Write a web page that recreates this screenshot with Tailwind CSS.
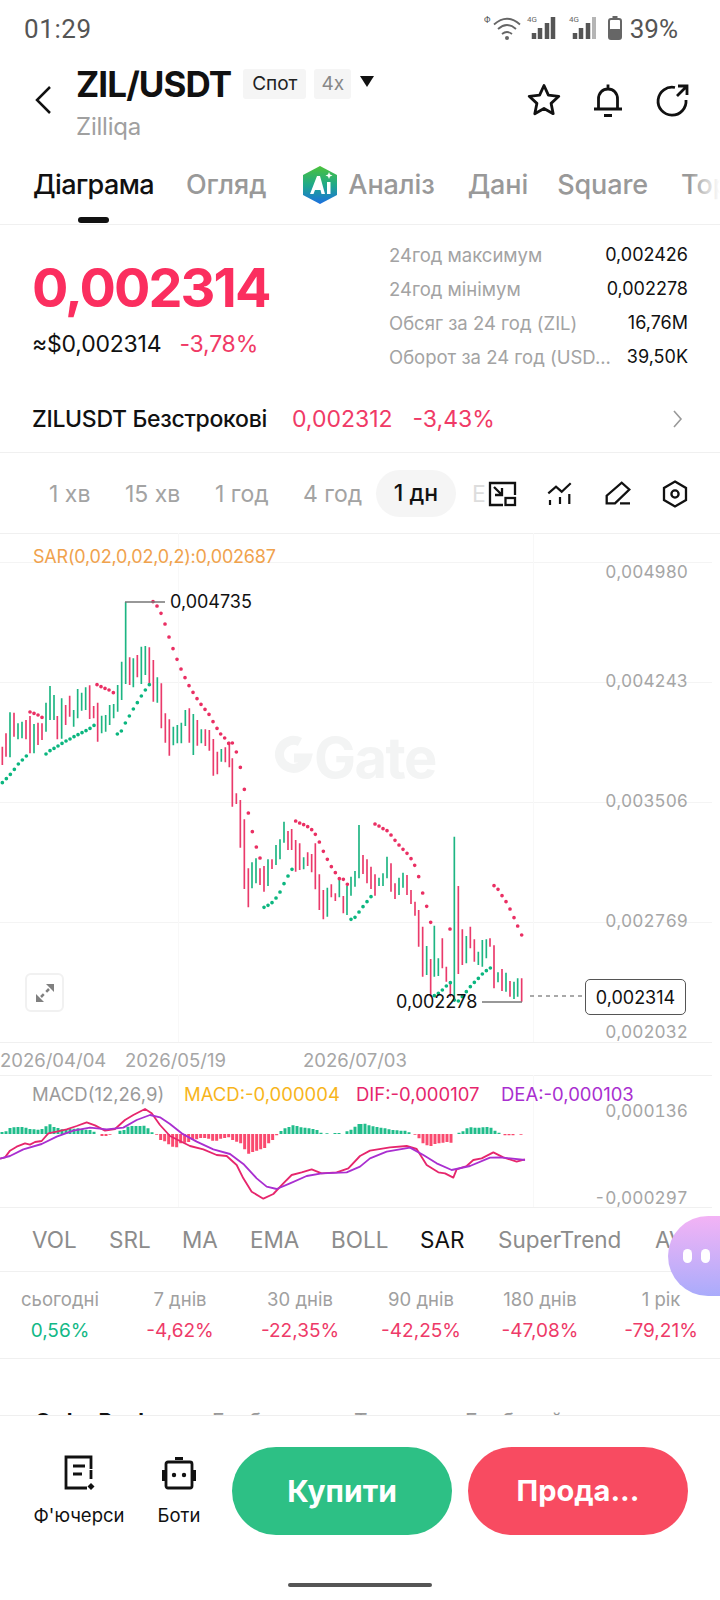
<!doctype html>
<html><head><meta charset="utf-8"><script src="https://cdn.jsdelivr.net/npm/@tailwindcss/browser@4"></script></head>
<body class="bg-white">
<div class="relative w-[720px] h-[1600px] overflow-hidden bg-white font-['Inter','Liberation_Sans',sans-serif] text-[#111]">

<div class="h-[58px] flex items-center justify-between pl-[24px] pr-[42px] font-['Roboto',sans-serif]">
  <span class="text-[26px] text-[#555] tracking-[0.6px]">01:29</span>
  <div class="flex items-center gap-[4px]">
    <svg width="142" height="32" viewBox="0 0 142 32" fill="none">
      <text x="0" y="10" font-size="9" fill="#555">Φ</text>
      <path d="M10 11.500Q23 0 36 11.500M14 16Q23 8 32 16M18 21Q23 17 28 21" stroke="#666" stroke-width="1.800"/><circle cx="23" cy="25" r="2" fill="#666"/>
      <text x="43" y="9" font-size="8" fill="#666">4G</text>
      <path d="M50 20v6M56 15v11M63 10v16M69 4v22" stroke="#555" stroke-width="4.500"/>
      <text x="85" y="9" font-size="8" fill="#666">4G</text>
      <path d="M91 20v6M97 15v11M104 10v16" stroke="#555" stroke-width="4.500"/><path d="M110 4v22" stroke="#b5b5b5" stroke-width="4"/>
      <rect x="125" y="6" width="12" height="20" rx="2" stroke="#666" stroke-width="2"/><rect x="128.500" y="3" width="5" height="3" fill="#666"/><rect x="125" y="16" width="12" height="10" rx="1.500" fill="#666"/>
    </svg>
    <span class="text-[26px] text-[#555]">39%</span>
  </div>
</div>

<div class="h-[88px] flex items-start">
  <div class="w-[76px] pl-[34px] pt-[28px]"><svg width="18" height="28" viewBox="0 0 18 28" fill="none"><path d="M16 1 3 14l13 13" stroke="#111" stroke-width="2.500"/></svg></div>
  <div class="flex-1">
    <div class="flex items-center h-[52px]">
      <span class="text-[35px] font-bold tracking-[-0.9px] leading-none">ZIL/USDT</span>
      <span class="ml-[12px] h-[30px] w-[63px] bg-[#f5f5f5] rounded-[3px] flex items-center justify-center text-[19px] text-[#222]">Спот</span>
      <span class="ml-[8px] h-[30px] w-[37px] bg-[#f5f5f5] rounded-[3px] flex items-center justify-center text-[19px] text-[#888]">4x</span>
      <svg class="ml-[9px] mb-[6px]" width="14" height="11" viewBox="0 0 14 11"><path d="M0 0h14L7 11z" fill="#111"/></svg>
    </div>
    <div class="text-[24px] text-[#a0a0a0] leading-none mt-[5px] tracking-[-0.2px]">Zilliqa</div>
  </div>
  <div class="flex items-center gap-[28px] pr-[30px] pt-[24px]">
    <svg width="36" height="36" viewBox="0 0 36 36" fill="none"><path d="M18 3.500l4.400 9.600 10.400 1.200-7.700 7.100 2.100 10.300L18 26.500l-9.200 5.200 2.100-10.300-7.700-7.100 10.400-1.200z" stroke="#111" stroke-width="2.800" stroke-linejoin="round"/></svg>
    <svg width="36" height="36" viewBox="0 0 36 36" fill="none"><path d="M4 27h28M8.500 27V17c0-6 4-10 9.500-10s9.500 4 9.500 10v10M18 2.500V7M14 33.500h8" stroke="#111" stroke-width="2.800"/></svg>
    <svg width="36" height="36" viewBox="0 0 36 36" fill="none"><path d="M21 5.500A14 14 0 1 0 32 18M23 14 32 5M24 4h9v9" stroke="#111" stroke-width="2.800"/></svg>
  </div>
</div>

<div class="relative h-[79px] border-b border-[#f0f0f0] overflow-hidden">
  <div class="flex items-center h-[78px] text-[27px] font-medium text-[#999] whitespace-nowrap tracking-[-0.1px]">
    <span class="ml-[33px] shrink-0 text-[#111] tracking-[-0.6px]">Діаграма</span>
    <span class="ml-[32px] shrink-0">Огляд</span>
    <svg class="ml-[36px] shrink-0" width="36" height="38" viewBox="0 0 36 38"><defs><linearGradient id="ai" x1="0" y1="0" x2="0" y2="1"><stop offset="0" stop-color="#4cc23a"/><stop offset="0.5" stop-color="#1fa98a"/><stop offset="1" stop-color="#1c6fe0"/></linearGradient></defs><path d="M18 0 35 9v20l-17 9L1 29V9z" fill="url(#ai)"/><path d="M8 28 15 10h3l5 18h-3.500l-1-4H13l-1.500 4zM25 16h3.500v12H25zM27 6l1 2.500 2.500 1-2.500 1-1 2.500-1-2.500-2.500-1 2.500-1z" fill="#fff"/></svg>
    <span class="ml-[10px] shrink-0">Аналіз</span>
    <span class="ml-[33px] shrink-0">Дані</span>
    <span class="ml-[29px] shrink-0">Square</span>
    <span class="ml-[33px] shrink-0">Top</span>
  </div>
  <div class="absolute left-[78px] top-[71px] w-[31px] h-[6px] rounded-full bg-[#111]"></div>
  <div class="absolute right-0 top-0 w-[30px] h-[76px] bg-gradient-to-r from-white/0 to-white"></div>
</div>

<div class="h-[177px] relative">
  <div class="pl-[32px] pt-[28px]">
    <div class="text-[54px] leading-[70px] font-bold text-[#fb2e5f] tracking-[-1.900px]">0,002314</div>
    <div class="flex items-center h-[38px] mt-[2px] text-[23px]"><span class="tracking-[-0.2px]">≈$0,002314</span><span class="ml-[18px] text-[#f03a66] tracking-[-0.2px]">-3,78%</span></div>
  </div>
  <div class="absolute left-[389px] right-[32px] top-[13px] text-[18.500px] leading-[34px]">
    <div class="flex justify-between"><span class="text-[#a3a3a3]">24год максимум</span><span class="text-[18px]">0,002426</span></div>
    <div class="flex justify-between"><span class="text-[#a3a3a3]">24год мінімум</span><span class="text-[18px]">0,002278</span></div>
    <div class="flex justify-between"><span class="text-[#a3a3a3]">Обсяг за 24 год (ZIL)</span><span class="text-[18px]">16,76M</span></div>
    <div class="flex justify-between"><span class="text-[#a3a3a3]">Оборот за 24 год (USD...</span><span class="text-[18px]">39,50K</span></div>
  </div>
</div>

<div class="h-[51px] flex items-center border-b border-[#f0f0f0] pl-[32px] pr-[36px] pb-[16px] text-[23px] relative whitespace-nowrap">
  <span class="font-medium tracking-[-0.3px]">ZILUSDT Безстрокові</span>
  <span class="ml-[25px] text-[#f03a66]">0,002312</span>
  <span class="ml-[20px] text-[#f03a66]">-3,43%</span>
  <svg class="ml-auto" width="12" height="20" viewBox="0 0 12 20" fill="none"><path d="M2 2l7 8-7 8" stroke="#999" stroke-width="1.600"/></svg>
</div>

<div class="relative h-[78px] pt-[4px] flex items-center text-[23px] text-[#a3a3a3] whitespace-nowrap">
  <span class="absolute left-[49px]">1 хв</span>
  <span class="absolute left-[125px]">15 хв</span>
  <span class="absolute left-[215px]">1 год</span>
  <span class="absolute left-[303px]">4 год</span>
  <span class="absolute left-[376px] top-[17px] w-[80px] h-[47px] rounded-full bg-[#f5f5f5] text-[#111] flex items-center justify-center font-medium">1 дн</span>
  <span class="absolute left-[472px] text-[#ddd]">E</span>
  <svg class="absolute left-[486px] top-[27px]" width="32" height="28" viewBox="-2 -1 32 28" fill="none"><rect x="-2" y="-1" width="32" height="28" fill="#fff"/><path d="M15 24H2V2H27V14" stroke="#111" stroke-width="2.300"/><rect x="17.500" y="17" width="9.500" height="7" stroke="#111" stroke-width="2.300"/><path d="M6 6l8 8M14 7v7H7" stroke="#111" stroke-width="2.300"/></svg>
  <svg class="absolute left-[546px] top-[28px]" width="28" height="26" viewBox="0 0 28 26" fill="none"><path d="M2.300 12.300 10 5.700l5.700 5 9-8.400M4 19v5M14 16v7M23.300 13v10" stroke="#111" stroke-width="2.200"/></svg>
  <svg class="absolute left-[604px] top-[28px]" width="28" height="26" viewBox="0 0 28 26" fill="none"><path d="M2.700 22.300v-7.600L17.700 1.700l7.600 6.800L11 22.300zM16 22.300h10" stroke="#111" stroke-width="2.300"/></svg>
  <svg class="absolute left-[662px] top-[27px]" width="26" height="28" viewBox="0 0 26 28" fill="none"><path d="M13 1.500 24 8v12l-11 6.500L2 20V8z" stroke="#111" stroke-width="2.300"/><circle cx="13" cy="14" r="3.600" stroke="#111" stroke-width="2.300"/></svg>
</div>

<div class="relative h-[676px]">
  <div class="absolute left-0 w-[720px] top-[2px] h-px bg-[#f0f0f0]"></div>
  <div class="absolute left-0 w-[712px] top-[31px] h-px bg-[#f4f4f4]"></div>
  <div class="absolute left-0 w-[712px] top-[151px] h-px bg-[#f4f4f4]"></div>
  <div class="absolute left-0 w-[712px] top-[271px] h-px bg-[#f4f4f4]"></div>
  <div class="absolute left-0 w-[712px] top-[391px] h-px bg-[#f4f4f4]"></div>
  <div class="absolute left-0 w-[712px] top-[511px] h-px bg-[#f0f0f0]"></div>
  <div class="absolute left-0 w-[712px] top-[544px] h-px bg-[#f0f0f0]"></div>
  <div class="absolute left-0 w-[712px] top-[676px] h-px bg-[#f0f0f0]"></div>
  <div class="absolute left-[178px] top-[2px] h-[509px] w-px bg-[#f8f8f8]"></div>
  <div class="absolute left-[533px] top-[2px] h-[509px] w-px bg-[#f8f8f8]"></div>
  <div class="absolute left-[178px] top-[544px] h-[132px] w-px bg-[#f8f8f8]"></div>
  <div class="absolute left-[533px] top-[544px] h-[132px] w-px bg-[#f8f8f8]"></div>

  <div class="absolute left-[314px] top-[195px] text-[56px] font-bold text-[#f3f4f4] leading-[64px] tracking-[-1.500px]">Gate</div>

  <svg class="absolute left-0 top-0" width="720" height="676" viewBox="0 531 720 676" fill="none">
    <path d="M300 742a14 14 0 1 0 7 16h-13" stroke="#f3f4f4" stroke-width="9"/>
    <g transform="translate(0,540) scale(0.33333)" stroke-width="5">
      <path stroke="#ea3a6b" d="M7 620V675M18 580V650M42 518V590M78 540V598M90 528V640M114 548V615M126 550V600M172 528V598M197 495V555M209 467V530M269 436V537M281 498V535M293 488V605M389 352V435M412 345V412M448 322V430M460 360V485M484 430V565M496 520V608M508 538V647M568 505V608M592 540V617M616 568V618M628 570V632M640 597V707M652 635V703M676 622V667M688 605V682M697 655V800"/>
      <path stroke="#1db582" d="M30 517V652M54 550V598M66 545V595M102 552V640M138 488V575M150 438V540M162 465V540M185 475V596M221 510V560M233 447V535M245 458V512M257 442V510M305 527V580M317 525V575M329 495V555M341 492V535M353 435V515M365 365V480M377 186V432M400 355V442M424 320V432M436 318V405M472 412V488M520 560V616M532 555V610M544 548V610M556 510V558M580 522V645M604 568V610M664 627V665"/>
    </g>
    <g transform="translate(0,800) scale(0.33333)" stroke-width="5">
      <path stroke="#ea3a6b" d="M709 -20V12M721 0V143M733 58V267M745 205V322M780 205V255M792 198V275M816 178V207M864 93V150M875 87V150M887 120V215M899 130V210M923 157V198M935 162V217M946 130V268M958 223V330M970 270V358M994 253V292M1006 280V303M1030 288V340"/>
      <path stroke="#1db582" d="M756 187V265M768 175V250M804 178V258M828 135V195M840 118V178M852 65V128M911 172V208M982 263V350M1018 240V292M1041 258V345M1053 230V287M1065 213V260M1077 75V235"/>
    </g>
    <g transform="translate(360,800) scale(0.33333)" stroke-width="5">
      <path stroke="#ea3a6b" d="M9 165V222M21 178V250M33 200V267M45 223V287M93 190V275M105 250V297M141 225V285M153 270V312M165 305V347M176 330V440M188 380V530M212 477V590M247 415V505M259 500V545M271 545V590M295 258V522M307 388V495M331 380V445M343 418V485M390 415V440M402 436V565M426 507V573M450 543V590M485 535V605"/>
      <path stroke="#1db582" d="M57 233V258M69 220V258M81 170V235M117 233V285M129 218V263M200 438V525M223 377V530M235 475V528M283 110V605M319 408V490M355 455V495M367 420V500M379 418V475M414 517V547M438 518V575M462 545V597M473 535V590"/>
    </g>
    <g transform="translate(0,540) scale(0.33333)" stroke="#0bb67f" stroke-width="11" stroke-linecap="round">
      <path d="M7 728h.1M19 716h.1M31 703h.1M43 688h.1M55 672h.1M67 660h.1M79 648h.1M138 642h.1M150 632h.1M162 625h.1M174 618h.1M186 610h.1M198 603h.1M210 597h.1M222 590h.1M234 584h.1M246 578h.1M258 572h.1M270 565h.1M282 556h.1M352 582h.1M364 573h.1M376 549h.1M388 528h.1M400 507h.1M412 488h.1M424 468h.1M436 450h.1M448 434h.1"/>
      <path stroke="#ea2f63" d="M90 516h.1M102 520h.1M114 525h.1M126 532h.1M291 434h.1M303 440h.1M315 445h.1M327 450h.1M340 458h.1M459 185h.1M471 198h.1M483 220h.1M495 252h.1M507 291h.1M519 326h.1M531 358h.1M543 387h.1M555 413h.1M567 437h.1M579 457h.1M591 476h.1M603 493h.1M615 508h.1M627 523h.1M639 545h.1M651 565h.1M662 582h.1M674 594h.1M686 610h.1M697 609h.1M709 636h.1M721 682h.1M733 748h.1"/>
    </g>
    <g transform="translate(0,800) scale(0.33333)" stroke="#0bb67f" stroke-width="11" stroke-linecap="round">
      <path d="M792 322h.1M804 316h.1M816 308h.1M828 294h.1M840 276h.1M852 251h.1M864 228h.1M876 208h.1M1053 358h.1M1065 352h.1M1077 336h.1"/>
      <path stroke="#ea2f63" d="M745 39h.1M757 95h.1M769 141h.1M780 174h.1M887 63h.1M899 69h.1M911 74h.1M923 80h.1M935 89h.1M946 103h.1M958 126h.1M970 154h.1M982 178h.1M994 200h.1M1006 218h.1M1018 236h.1M1030 238h.1M1042 253h.1"/>
    </g>
    <g transform="translate(360,800) scale(0.33333)" stroke="#0bb67f" stroke-width="11" stroke-linecap="round">
      <path d="M9 320h.1M21 305h.1M33 290h.1M223 587h.1M235 580h.1M247 570h.1M259 558h.1M271 548h.1M283 600h.1M295 603h.1M307 590h.1M319 575h.1M331 560h.1M343 547h.1M355 535h.1M367 522h.1M379 512h.1M391 504h.1"/>
      <path stroke="#ea2f63" d="M45 72h.1M57 78h.1M69 86h.1M81 92h.1M93 105h.1M105 121h.1M117 135h.1M129 148h.1M141 160h.1M153 176h.1M164 196h.1M176 230h.1M188 279h.1M200 319h.1M212 367h.1M270 387h.1M402 257h.1M414 268h.1M426 287h.1M438 305h.1M450 327h.1M462 353h.1M473 378h.1M485 405h.1"/>
    </g>
    <path d="M125 602H165M482 1002H522" stroke="#777" stroke-width="1.300"/>
    <path d="M530 996H582" stroke="#555" stroke-width="1.200" stroke-dasharray="4 4"/>

    <g transform="translate(0,1060) scale(0.33333)" stroke-width="9" stroke="#20bd8b">
      <path d="M6 222V216M18 222V214M30 222V204M42 222V202M54 222V201M66 222V201M78 222V203M90 222V207M102 222V208M114 222V209M126 222V207M138 222V199M150 222V193M162 222V201M174 222V204M186 222V208M198 222V208M210 222V207M222 222V206M234 222V205M246 222V207M258 222V209M270 222V210M282 222V215M360 222V212M372 222V210M384 222V200M396 222V198M408 222V198M420 222V198M432 222V197M444 222V205M456 222V217M843 222V213M855 222V205M867 222V201M879 222V196M891 222V198M903 222V202M915 222V203M927 222V205M939 222V207M951 222V210M963 222V218M981 222V220M1005 222V219M1017 222V219M1041 222V214M1053 222V209M1065 222V200M1077 222V192"/>
      <path stroke="#fa4a6f" d="M306 222V228M318 222V228M330 222V224M470 222V224M482 222V240M494 222V244M506 222V253M518 222V260M530 222V262M542 222V250M554 222V248M566 222V246M578 222V240M590 222V238M602 222V234M614 222V234M626 222V236M638 222V242M650 222V242M662 222V236M674 222V234M686 222V232M698 222V240M710 222V245M722 222V250M734 222V268M746 222V281M758 222V276M770 222V272M782 222V268M794 222V264M806 222V250M818 222V240M830 222V226"/>
    </g>
    <g transform="translate(360,1060) scale(0.33333)" stroke-width="9" stroke="#20bd8b">
      <path d="M3 222V192M15 222V191M27 222V196M39 222V199M51 222V201M63 222V203M75 222V205M87 222V208M99 222V210M111 222V211M123 222V212M135 222V212M147 222V217M297 222V218M309 222V214M321 222V205M333 222V202M345 222V203M357 222V203M369 222V202M381 222V201M393 222V203M405 222V212M417 222V218"/>
      <path stroke="#fa4a6f" d="M165 222V224M177 222V235M189 222V250M201 222V256M213 222V258M225 222V252M237 222V250M249 222V248M261 222V246M273 222V248M435 222V226M447 222V226M459 222V226M483 222V224"/>
    </g>
    <g transform="translate(0,1060) scale(0.33333)" stroke-width="5.500" stroke-linejoin="round">
      <path stroke="#e6266c" d="M0 296L15 292 30 272 50 260 75 250 90 254 105 246 125 243 145 220 170 215 200 208 230 198 260 187 285 196 315 212 345 207 375 180 400 165 435 147 455 160 480 195 510 228 540 243 570 258 610 268 650 285 680 288 710 315 730 355 755 395 790 416 820 402 850 370 875 345 905 337 935 328 965 340 1010 337 1045 325 1080 288 1110 272 1170 262 1220 258 1250 267 1280 315 1315 337 1335 340 1360 353 1370 328 1400 318 1420 300 1445 295 1480 277 1510 292 1550 305 1575 298"/>
      <path stroke="#a92fd0" d="M0 296L30 288 70 268 125 252 170 230 220 212 270 203 320 208 370 203 410 180 450 165 480 172 510 192 545 220 590 245 640 268 690 282 730 312 770 355 800 380 830 387 870 370 920 348 965 340 1040 337 1080 320 1110 295 1160 275 1230 263 1270 285 1310 310 1355 330 1410 318 1470 293 1500 292 1575 300"/>
    </g>
  </svg>

  <span class="absolute left-[33px] top-[14px] text-[18px] leading-[24px] text-[#f0a24d] tracking-[-0.2px]">SAR(0,02,0,02,0,2):0,002687</span>
  <span class="absolute right-[32px] top-[29px] text-[17.200px] leading-[24px] text-[#a6a6a6] tabular-nums">0,004980</span>
  <span class="absolute right-[32px] top-[138px] text-[17.200px] leading-[24px] text-[#a6a6a6] tabular-nums">0,004243</span>
  <span class="absolute right-[32px] top-[258px] text-[17.200px] leading-[24px] text-[#a6a6a6] tabular-nums">0,003506</span>
  <span class="absolute right-[32px] top-[378px] text-[17.200px] leading-[24px] text-[#a6a6a6] tabular-nums">0,002769</span>
  <span class="absolute right-[32px] top-[489px] text-[17.200px] leading-[24px] text-[#a6a6a6] tabular-nums">0,002032</span>
  <span class="absolute left-[170px] top-[59px] text-[18px] leading-[24px]">0,004735</span>
  <span class="absolute left-[396px] top-[459px] text-[18px] leading-[24px]">0,002278</span>
  <span class="absolute left-[585px] top-[448px] w-[101px] h-[36px] rounded-[5px] border border-[#555] bg-white flex items-center justify-center text-[18px]">0,002314</span>
  <div class="absolute left-[25px] top-[442px] w-[39px] h-[39px] rounded-[6px] border-2 border-[#f1f1f1] bg-white flex items-center justify-center">
    <svg width="20" height="20" viewBox="0 0 20 20" fill="none"><path d="M1 19v-8l8 8zM19 1v8l-8-8z" fill="#808080"/><path d="M6 14l2.800-2.800M14 6l-2.800 2.800" stroke="#808080" stroke-width="2.500"/></svg>
  </div>
  <span class="absolute left-[0px] top-[517px] text-[18.500px] leading-[24px] text-[#a6a6a6]">2026/04/04</span>
  <span class="absolute left-[125px] top-[517px] text-[18.500px] leading-[24px] text-[#a6a6a6]">2026/05/19</span>
  <span class="absolute left-[303px] top-[517px] text-[18.500px] leading-[24px] text-[#a6a6a6]">2026/07/03</span>
  <span class="absolute left-[32px] top-[551px] text-[18.500px] leading-[24px] text-[#9a9a9a]">MACD(12,26,9)</span>
  <span class="absolute left-[184px] top-[551px] text-[18.500px] leading-[24px] text-[#f7b51c]">MACD:-0,000004</span>
  <span class="absolute left-[356px] top-[551px] text-[18.500px] leading-[24px] text-[#e6266c]">DIF:-0,000107</span>
  <span class="absolute left-[501px] top-[551px] text-[18.500px] leading-[24px] text-[#a92fd0]">DEA:-0,000103</span>
  <span class="absolute right-[32px] top-[568px] text-[17.200px] leading-[24px] text-[#a6a6a6] tabular-nums">0,000136</span>
  <span class="absolute right-[32px] top-[655px] text-[17.200px] leading-[24px] text-[#a6a6a6] tabular-nums">-0,000297</span>
</div>

<div class="relative h-[65px] border-b border-[#f0f0f0] text-[22.500px] text-[#8c8c8c] whitespace-nowrap">
  <span class="absolute left-[32px] top-[16px]">VOL</span>
  <span class="absolute left-[109px] top-[16px]">SRL</span>
  <span class="absolute left-[182px] top-[16px]">MA</span>
  <span class="absolute left-[250px] top-[16px]">EMA</span>
  <span class="absolute left-[331px] top-[16px]">BOLL</span>
  <span class="absolute left-[420px] top-[16px] text-[#111]">SAR</span>
  <span class="absolute left-[498px] top-[16px]">SuperTrend</span>
  <span class="absolute left-[655px] top-[16px]">AVL</span>
</div>

<div class="grid grid-cols-6 h-[87px] border-b border-[#f0f0f0] pt-[11px] text-center text-[18.500px] leading-[32px] text-[#a0a0a0]">
  <div class="w-[120px]">сьогодні<div class="text-[#12b886] text-[19px]">0,56%</div></div>
  <div class="w-[120px]">7 днів<div class="text-[#ee3a68] text-[19px]">-4,62%</div></div>
  <div class="w-[120px]">30 днів<div class="text-[#ee3a68] text-[19px]">-22,35%</div></div>
  <div class="w-[120px] pl-[2px]">90 днів<div class="text-[#ee3a68] text-[19px]">-42,25%</div></div>
  <div class="w-[120px]">180 днів<div class="text-[#ee3a68] text-[19px]">-47,08%</div></div>
  <div class="w-[120px] pl-[2px]">1 рік<div class="text-[#ee3a68] text-[19px]">-79,21%</div></div>
</div>

<div class="h-[56px] overflow-hidden relative text-[21px] whitespace-nowrap text-[#999]">
  <span class="absolute left-[35px] top-[47px] font-bold text-[#111]">Order Book</span>
  <span class="absolute left-[212px] top-[47px]">Глибина</span>
  <span class="absolute left-[354px] top-[47px]">Торги</span>
  <span class="absolute left-[465px] top-[47px]">Глибокий</span>
</div>

<div class="relative h-[185px] border-t border-[#efefef] bg-white">
  <div class="absolute left-[32px] top-[39px] w-[94px] flex flex-col items-center">
    <svg width="32" height="36" viewBox="0 0 32 36" fill="none"><path d="M28 14V2H3v31h21M10 11h12M10 19h9" stroke="#111" stroke-width="2.800"/><path d="M28 28l3.500 3.500L28 35l-3.500-3.500z" fill="#111"/><path d="M28 15v9" stroke="#111" stroke-width="2.800"/></svg>
    <span class="text-[18.500px] mt-[12px] whitespace-nowrap leading-[24px]">Ф'ючерси</span>
  </div>
  <div class="absolute left-[150px] top-[39px] w-[58px] flex flex-col items-center">
    <svg width="36" height="36" viewBox="0 0 36 36" fill="none"><rect x="5" y="7" width="26" height="26" rx="2" stroke="#111" stroke-width="2.800"/><path d="M14 2h8v3h-8zM1 15h3v11H1zM32 15h3v11h-3z" fill="#111"/><circle cx="13" cy="20" r="2.200" fill="#111"/><circle cx="23" cy="20" r="2.200" fill="#111"/></svg>
    <span class="text-[18.500px] mt-[12px] leading-[24px]">Боти</span>
  </div>
  <div class="absolute left-[232px] top-[31px] w-[220px] h-[88px] rounded-full bg-[#2dc085] text-white text-[30px] font-bold flex items-center justify-center">Купити</div>
  <div class="absolute left-[468px] top-[31px] w-[220px] h-[88px] rounded-full bg-[#f84b61] text-white text-[29px] font-bold flex items-center justify-center">Прода...</div>
  <div class="absolute left-[288px] top-[167px] w-[144px] h-[4px] rounded-full bg-[#555]"></div>
</div>

<div class="absolute left-[668px] top-[1216px] w-[90px] h-[80px] rounded-[40px] bg-gradient-to-b from-[#f3b3f5] to-[#a9abfb] flex items-center gap-[9px] pl-[15px]">
  <span class="w-[9px] h-[14px] rounded-full bg-white"></span><span class="w-[9px] h-[14px] rounded-full bg-white"></span>
</div>
</div>
</body></html>
